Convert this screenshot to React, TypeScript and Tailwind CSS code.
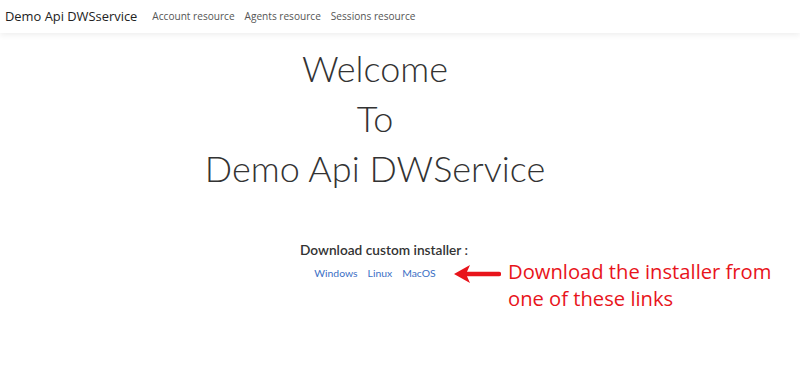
import React from 'react'

const sans = { fontFamily: '"Open Sans", "Noto Sans", sans-serif' }
const lato = { fontFamily: 'Lato, "Open Sans", sans-serif' }

export default function App() {
  return (
    <div className="min-h-[371px] bg-white text-[#212529]" style={sans}>
      {/* Navbar */}
      <nav className="h-[33px] flex items-center px-[5px] bg-white shadow-[0_2px_6px_rgba(0,0,0,0.07)]">
        <span className="text-[12.9px] text-[#222] mr-[15px]">Demo Api DWSservice</span>
        <div className="flex gap-[10px] text-[10.1px] text-[#555]">
          <a>Account resource</a>
          <a>Agents resource</a>
          <a>Sessions resource</a>
        </div>
      </nav>

      <div className="w-[750px] text-center" style={lato}>
        <h1 className="mt-[10px] text-[36px] leading-[50px] font-light text-[#333]">
          <div>Welcome</div>
          <div>To</div>
          <div>Demo Api DWService</div>
        </h1>

        <div className="mt-[47px] text-[13.7px] font-semibold text-[#333] pl-[18px]">Download custom installer :</div>
        <div className="relative mt-[5px] flex justify-center gap-[10px] text-[10.4px] text-[#3b6fc5]">
          <a>Windows</a>
          <a>Linux</a>
          <a>MacOS</a>
          <div className="absolute left-[453px] top-[-8px] flex items-start gap-[7px]" style={sans}>
            <svg width="48" height="22" viewBox="0 0 48 22" className="mt-[5px]">
              <path d="M46 11 H14" stroke="#e8141b" strokeWidth="4.5" strokeLinecap="round" />
              <path d="M1 11 L17 2 L13 11 L17 20 Z" fill="#e8141b" />
            </svg>
            <div className="text-left text-[20.2px] leading-[27px] text-[#e8141b] whitespace-nowrap">
              Download the installer from
              <br />
              one of these links
            </div>
          </div>
        </div>
      </div>
    </div>
  )
}
